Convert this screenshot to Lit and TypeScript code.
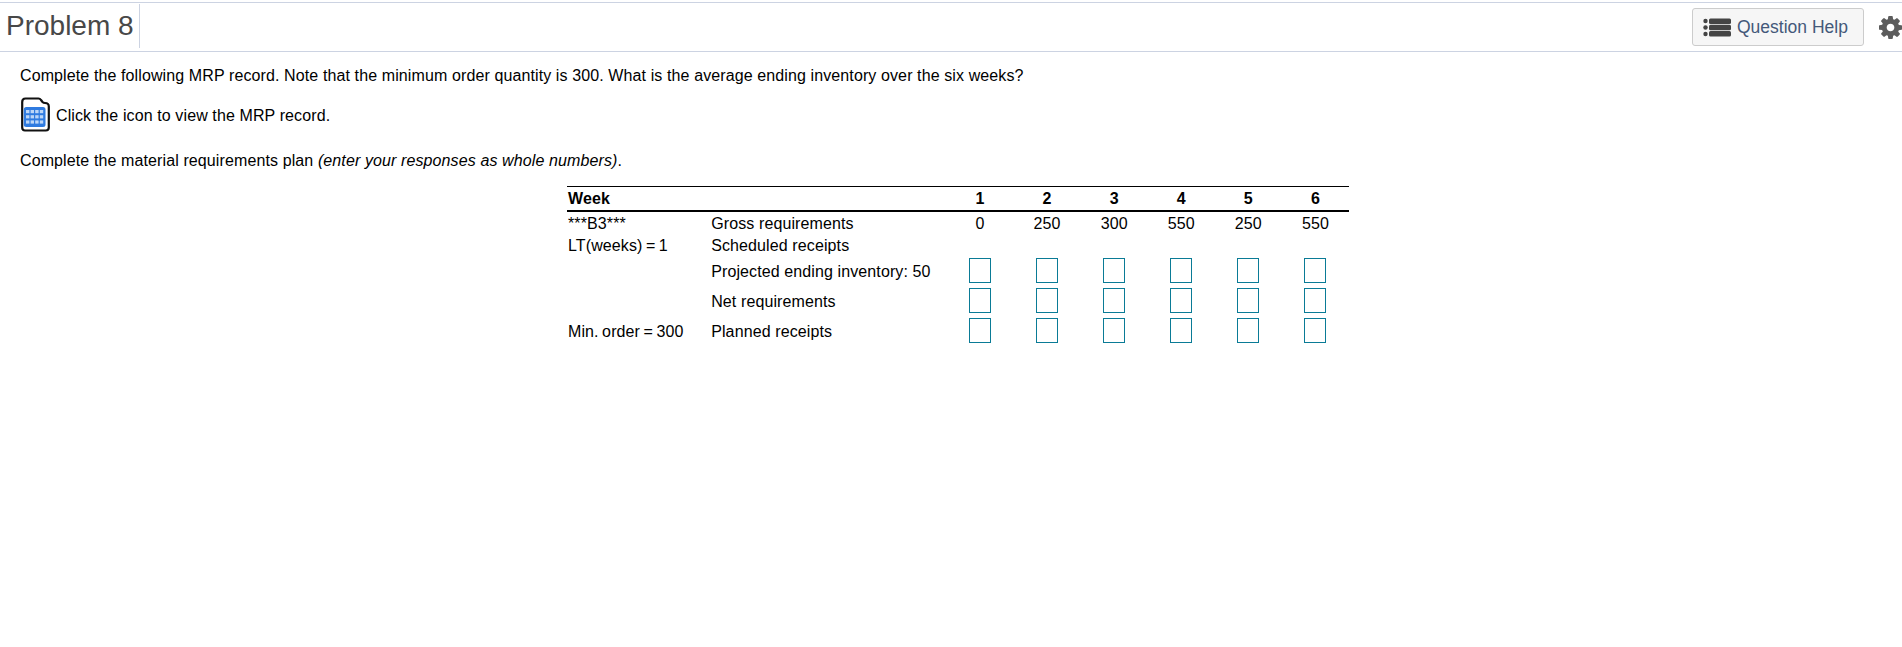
import { LitElement, html, css } from "lit";
import { customElement } from "lit/decorators.js";

const weeks = [1, 2, 3, 4, 5, 6];
const gross = [0, 250, 300, 550, 250, 550];

@customElement("app-root")
export class AppRoot extends LitElement {
  static styles = css`
    :host { display: block; width: 1902px; height: 647px; overflow: hidden; background: #fff; font-family: "Liberation Sans", Arial, sans-serif; font-size: 16px; letter-spacing: 0.11px; color: #000; }
    .head { display: flex; align-items: center; height: 48px; margin-top: 2px; border-top: 1px solid #ccd3e2; border-bottom: 1px solid #ccd3e2; }
    .title { box-sizing: border-box; width: 140px; font-size: 28px; letter-spacing: 0; color: #484848; padding-left: 6px; height: 44px; line-height: 43px; margin-bottom: 2px; border-right: 1px solid #ccd3e2; }
    .help { margin-left: auto; display: flex; align-items: center; gap: 6px; box-sizing: border-box; width: 172px; height: 38px; padding-left: 10px; background: #f6f6f6; border: 1px solid #ccc; border-radius: 3px; color: #44597a; font-size: 17.5px; letter-spacing: 0; }
    .gear { margin: 0 0 0 15px; width: 23px; height: 23px; fill: #5c5c5c; flex: none; }
    .body { padding: 15px 20px 0; }
    p { margin: 0; line-height: 17px; }
    .line { display: flex; align-items: center; gap: 6px; margin-top: 14px; height: 35px; }
    .file { margin-top: -2px; }
    .instr { margin-top: 19px; }
    table { border-collapse: separate; border-spacing: 0; table-layout: fixed; width: 782px; margin: 17px 0 0 547px; }
    td, th { padding: 0 0 0 1px; font-weight: normal; text-align: left; line-height: 16px; white-space: nowrap; }
    th { font-weight: bold; height: 23px; border-top: 1px solid #000; border-bottom: 2px solid #000; }
    .num { text-align: center; padding: 0; }
    .r1 { height: 23px; }
    .r2 { height: 21px; }
    .r3 { height: 30px; }
    .r3 .lbl { padding-top: 2px; }
    .r3 .num { padding-bottom: 1px; }
    .tight { word-spacing: -1.1px; }
    .box { display: block; box-sizing: border-box; width: 22px; height: 25px; margin: 0 auto; border: 1px solid #0a7b96; padding: 0; background: #fff; }
  `;

  private inputs() {
    return weeks.map(() => html`<td class="num"><input class="box" type="text" aria-label="value" /></td>`);
  }

  render() {
    return html`
      <div class="head">
        <div class="title">Problem 8</div>
        <div class="help">
          <svg width="28" height="19" viewBox="0 0 28 19" fill="#444">
            <circle cx="2.5" cy="3" r="2.2" /><circle cx="2.500" cy="9.500" r="2.2" /><circle cx="2.500" cy="16" r="2.2" />
            <rect x="6" y="0.500" width="22" height="5.400" rx="1.500" /><rect x="6" y="6.800" width="22" height="5.400" rx="1.500" /><rect x="6" y="13.100" width="22" height="5.400" rx="1.500" />
          </svg>
          <span>Question Help</span>
        </div>
        <svg class="gear" viewBox="0 0 1536 1536"><path d="M1024 768q0-106-75-181t-181-75-181 75-75 181 75 181 181 75 181-75 75-181zm512-109v222q0 12-8 23t-20 13l-185 28q-19 54-39 91 35 50 107 138 10 12 10 25t-9 23q-27 37-99 108t-94 71q-12 0-26-9l-138-108q-44 23-91 38-16 136-29 186-7 28-36 28h-222q-14 0-24.500-8.500t-11.500-21.500l-28-184q-49-16-90-37l-141 107q-10 9-25 9-14 0-25-11-126-114-165-168-7-10-7-23 0-12 8-23 15-21 51-66.500t54-70.500q-27-50-41-99l-183-27q-13-2-21-12.500t-8-23.500v-222q0-12 8-23t19-13l186-28q14-46 39-92-40-57-107-138-10-12-10-24 0-10 9-23 26-36 98.500-107.500t94.500-71.500q13 0 26 10l138 107q44-23 91-38 16-136 29-186 7-28 36-28h222q14 0 24.500 8.500t11.500 21.500l28 184q49 16 90 37l142-107q9-9 24-9 13 0 25 10 129 119 165 170 7 8 7 22 0 12-8 23-15 21-51 66.500t-54 70.500q26 50 41 98l183 28q13 2 21 12.500t8 23.500z" /></svg>
      </div>
      <div class="body">
        <p>Complete the following MRP record. Note that the minimum order quantity is 300. What is the average ending inventory over the six weeks?</p>
        <div class="line">
          <svg class="file" width="30" height="35" viewBox="0 0 30 35">
            <path d="M5.500 1.500H18.500Q20 1.500 21 3L22.500 5Q23.500 6 25 6Q28.800 6 28.800 9.500V30.500Q28.800 33.500 25.800 33.500H5Q2.200 33.500 2.200 30.500V5Q2.200 1.500 5.500 1.500Z" fill="#fff" stroke="#111" stroke-width="2.200" />
            <rect x="3.800" y="10" width="21.700" height="20" rx="2.500" fill="#2f7be0" />
            <g fill="#bcd6f7">
              <rect x="6" y="13" width="3.400" height="3.200" /><rect x="10.600" y="13" width="3.400" height="3.200" /><rect x="15.200" y="13" width="3.400" height="3.200" /><rect x="19.800" y="13" width="3.400" height="3.200" />
              <rect x="6" y="18.200" width="3.400" height="3.200" /><rect x="10.600" y="18.200" width="3.400" height="3.200" /><rect x="15.200" y="18.200" width="3.400" height="3.200" /><rect x="19.800" y="18.200" width="3.400" height="3.200" />
              <rect x="6" y="23.400" width="3.400" height="3.200" /><rect x="10.600" y="23.400" width="3.400" height="3.200" /><rect x="15.200" y="23.400" width="3.400" height="3.200" /><rect x="19.800" y="23.400" width="3.400" height="3.200" />
            </g>
          </svg>
          <span>Click the icon to view the MRP record.</span>
        </div>
        <p class="instr">Complete the material requirements plan <i>(enter your responses as whole numbers)</i>.</p>
        <table>
          <colgroup>
            <col style="width:143px" /><col style="width:236px" />
            ${weeks.map(() => html`<col style="width:67px" />`)}
          </colgroup>
          <tr>
            <th>Week</th><th></th>
            ${weeks.map((w) => html`<th class="num">${w}</th>`)}
          </tr>
          <tr class="r1"><td>***B3***</td><td>Gross requirements</td>${gross.map((g) => html`<td class="num">${g}</td>`)}</tr>
          <tr class="r2"><td class="tight">LT(weeks) = 1</td><td>Scheduled receipts</td>${weeks.map(() => html`<td></td>`)}</tr>
          <tr class="r3"><td class="lbl"></td><td class="lbl">Projected ending inventory: 50</td>${this.inputs()}</tr>
          <tr class="r3"><td class="lbl"></td><td class="lbl">Net requirements</td>${this.inputs()}</tr>
          <tr class="r3"><td class="lbl tight">Min. order = 300</td><td class="lbl">Planned receipts</td>${this.inputs()}</tr>
        </table>
      </div>
    `;
  }
}
